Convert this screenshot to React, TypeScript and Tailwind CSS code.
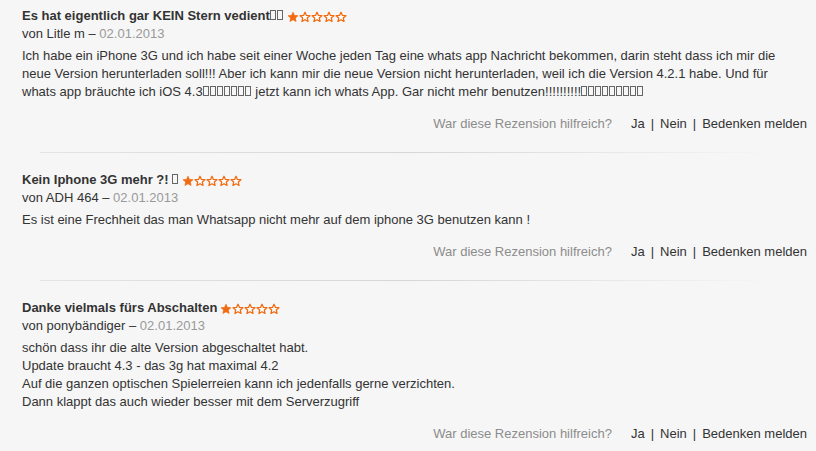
import React from 'react'

const font = { fontFamily: '"Liberation Sans", Arial, sans-serif' }

function Tofu({ count }: { count: number }) {
  return (
    <span className="inline-flex">
      {Array.from({ length: count }).map((_, i) => (
        <span
          key={i}
          className="inline-block w-[6px] h-[10px] mr-px border border-[#666] align-baseline"
        />
      ))}
    </span>
  )
}

function Star({ filled }: { filled: boolean }) {
  return (
    <svg width="12" height="12" viewBox="0 0 24 24" className="inline-block">
      <path
        d="M12 2.5l2.9 6.3 6.9.7-5.2 4.6 1.5 6.8L12 17.4l-6.1 3.5 1.5-6.8-5.2-4.6 6.9-.7z"
        fill={filled ? '#f26a10' : '#ffffff'}
        stroke="#f26a10"
        strokeWidth={filled ? 1.5 : 2.6}
        strokeLinejoin="round"
      />
    </svg>
  )
}

function Stars() {
  return (
    <span className="inline-flex items-center ml-[3px] relative top-[1px]">
      <Star filled />
      <Star filled={false} />
      <Star filled={false} />
      <Star filled={false} />
      <Star filled={false} />
    </span>
  )
}

function Helpful() {
  return (
    <div className="flex justify-end items-center pr-[9px] text-[13px] leading-[18px]">
      <span className="text-[#8c8c8c] mr-[19px]">War diese Rezension hilfreich?</span>
      <span className="text-[#333]">Ja</span>
      <span className="text-[#333] mx-[6px]">|</span>
      <span className="text-[#333]">Nein</span>
      <span className="text-[#333] mx-[6px]">|</span>
      <span className="text-[#333]">Bedenken melden</span>
    </div>
  )
}

function Divider() {
  return (
    <div className="h-px mx-[40px] bg-gradient-to-r from-[#e4e4e4] via-[#d6d6d6] to-transparent" />
  )
}

type Review = {
  title: React.ReactNode
  author: string
  date: string
  body: React.ReactNode
}

const reviews: Review[] = [
  {
    title: (
      <>
        Es hat eigentlich gar KEIN Stern vedient
        <Tofu count={2} />
      </>
    ),
    author: 'Litle m',
    date: '02.01.2013',
    body: (
      <>
        Ich habe ein iPhone 3G und ich habe seit einer Woche jeden Tag eine whats app Nachricht bekommen, darin steht dass ich mir die neue Version herunterladen soll!!! Aber ich kann mir die neue Version nicht herunterladen, weil ich die Version 4.2.1 habe. Und für whats app bräuchte ich iOS 4.3
        <Tofu count={7} /> jetzt kann ich whats App. Gar nicht mehr benutzen!!!!!!!!!!
        <Tofu count={9} />
      </>
    ),
  },
  {
    title: (
      <>
        Kein Iphone 3G mehr ?! <Tofu count={1} />
      </>
    ),
    author: 'ADH 464',
    date: '02.01.2013',
    body: <>Es ist eine Frechheit das man Whatsapp nicht mehr auf dem iphone 3G benutzen kann !</>,
  },
  {
    title: <>Danke vielmals fürs Abschalten</>,
    author: 'ponybändiger',
    date: '02.01.2013',
    body: (
      <>
        schön dass ihr die alte Version abgeschaltet habt.
        <br />
        Update braucht 4.3 - das 3g hat maximal 4.2
        <br />
        Auf die ganzen optischen Spielerreien kann ich jedenfalls gerne verzichten.
        <br />
        Dann klappt das auch wieder besser mit dem Serverzugriff
      </>
    ),
  },
]

export default function App() {
  return (
    <div className="w-[816px] h-[451px] overflow-hidden bg-[#f6f6f6] text-[#333]" style={font}>
      {reviews.map((r, i) => (
        <div key={i}>
          <div className="pl-[22px] pr-[14px] pt-[7px]">
            <div className="text-[13px] leading-[18px] font-bold text-[#333] flex items-center">
              <span>{r.title}</span>
              <Stars />
            </div>
            <div className="text-[13px] leading-[18px] text-[#333]">
              von {r.author} – <span className="text-[#999]">{r.date}</span>
            </div>
            <div className="mt-[4px] text-[13px] leading-[18px] text-[#333]">{r.body}</div>
          </div>
          <div className="mt-[14px] mb-[19px]">
            <Helpful />
          </div>
          {i < reviews.length - 1 && <Divider />}
          {i < reviews.length - 1 && <div className="h-[11px]" />}
        </div>
      ))}
    </div>
  )
}
